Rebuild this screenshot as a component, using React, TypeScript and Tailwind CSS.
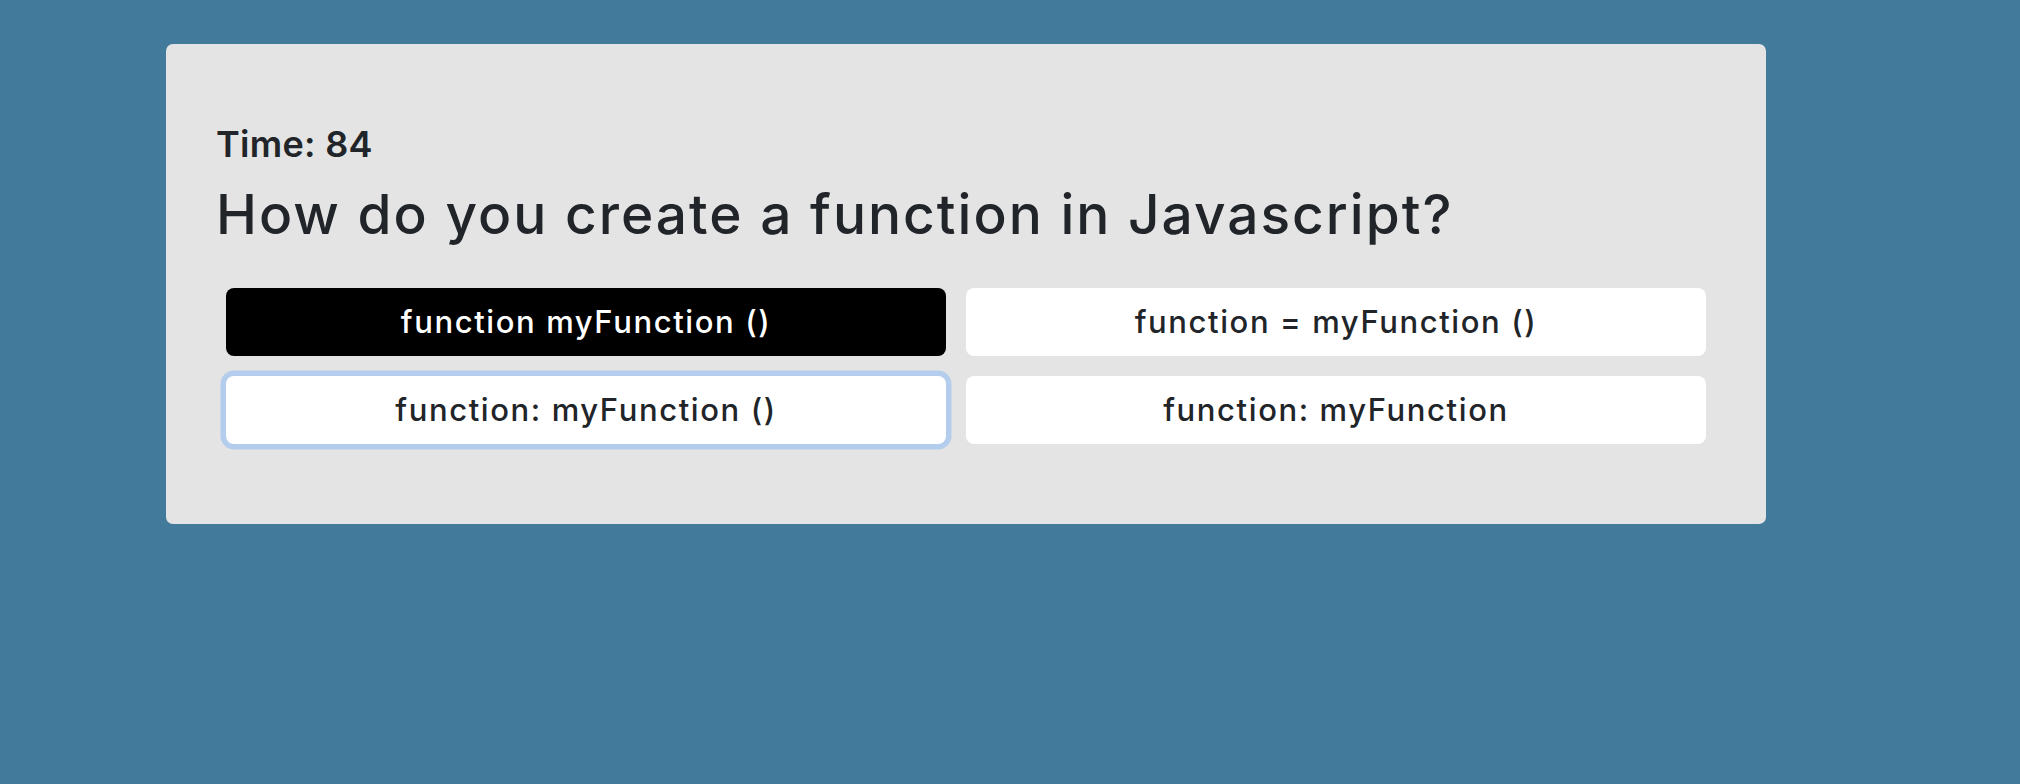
import React from 'react';

interface Choice {
  label: string;
  state: 'picked' | 'focused' | 'idle';
}

const choices: Choice[] = [
  { label: 'function myFunction ()', state: 'picked' },
  { label: 'function = myFunction ()', state: 'idle' },
  { label: 'function: myFunction ()', state: 'focused' },
  { label: 'function: myFunction', state: 'idle' },
];

const font = { fontFamily: 'Inter, "Open Sans", sans-serif' };

const App: React.FC = () => {
  return (
    <div className="min-h-[784px] w-full bg-[#427a9c] pt-[44px]" style={font}>
      <div className="ml-[166px] w-[1600px] rounded-[7px] bg-[#e4e4e4] px-[50px] pt-[78px] pb-[70px] text-[#212529]">
        <h3 className="text-[36px] leading-[44px] font-semibold tracking-[0.3px]">Time: 84</h3>
        <h1 className="mt-[15px] text-[55px] leading-[66px] font-medium tracking-[2px]">
          How do you create a function in Javascript?
        </h1>

        <div className="mt-[31px] grid grid-cols-[740px_760px]">
          {choices.map((choice) => (
            <button
              key={choice.label}
              className={
                choice.state === 'picked'
                  ? 'm-[10px] h-[68px] rounded-[8px] bg-black text-[31px] font-medium tracking-[1.6px] text-white'
                  : choice.state === 'focused'
                  ? 'm-[10px] h-[68px] rounded-[8px] bg-white text-[31px] font-medium tracking-[1.6px] text-[#212529] shadow-[0_0_0_5.5px_#b5cdec]'
                  : 'm-[10px] h-[68px] rounded-[8px] bg-white text-[31px] font-medium tracking-[1.6px] text-[#212529]'
              }
            >
              {choice.label}
            </button>
          ))}
        </div>
      </div>
    </div>
  );
};

export default App;
